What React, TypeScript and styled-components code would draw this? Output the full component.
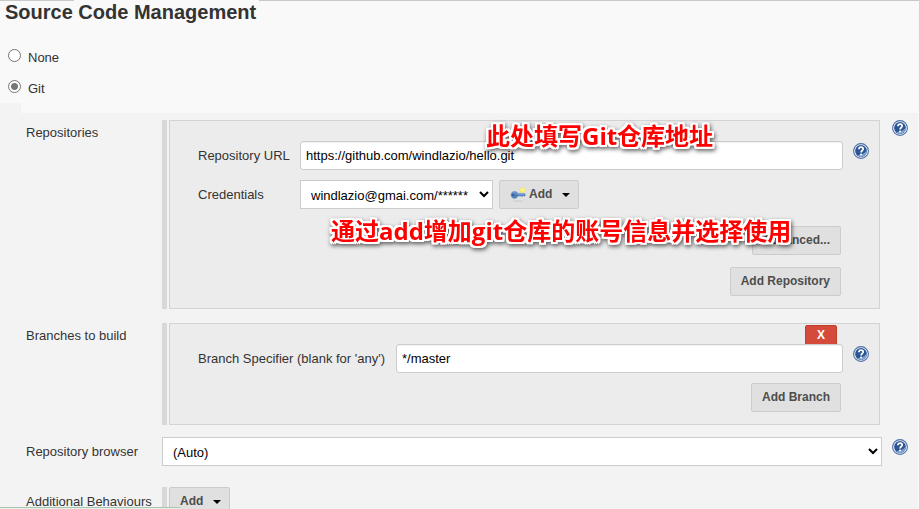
import React, { useState } from "react";
import styled, { createGlobalStyle } from "styled-components";

const GlobalStyle = createGlobalStyle`
  *, *::before, *::after { box-sizing: border-box; }
  body {
    margin: 0;
    overflow: hidden;
    background: #f9f9f9;
    color: #333;
    font: 13px/18px "Liberation Sans", Arial, sans-serif;
  }
  button, input, select { font: inherit; margin: 0; }
`;

const Page = styled.main`
  position: relative;
  min-height: 100vh;
  display: flex;
  flex-direction: column;
`;

const TopEdge = styled.div`
  display: flex;
  justify-content: space-between;
  height: 1px;
`;

const EdgeLine = styled.span<{ $grow?: boolean }>`
  background: #c8c8c8;
  flex: ${(p) => (p.$grow ? "1" : "0 0 74px")};
  margin-left: ${(p) => (p.$grow ? "185px" : "0")};
`;

const Title = styled.h1`
  margin: 0;
  padding-left: 5px;
  font-size: 20px;
  line-height: 22px;
  font-weight: bold;
`;

const Choices = styled.div`
  display: flex;
  flex-direction: column;
  gap: 13px;
  padding: 26px 8px 5px;
`;

const Choice = styled.label`
  display: flex;
  gap: 7px;
  height: 18px;
  line-height: 18px;
`;

const Radio = styled.input.attrs({ type: "radio" })`
  width: 13px;
  height: 13px;
  appearance: none;
  border: 1px solid #767676;
  border-radius: 50%;
  background: #fff;

  &:checked {
    background: radial-gradient(circle, #767676 3px, #fff 4px);
  }
`;

const Indent = styled.div`
  width: 21px;
  height: 10px;
  background: #f3f3f3;
`;

const Settings = styled.section`
  flex: 1;
  display: flex;
  flex-direction: column;
  margin-right: 1px;
  padding: 7px 10px 0 26px;
  background: #f3f3f3;
`;

const Row = styled.div<{ $gap: number }>`
  display: grid;
  grid-template-columns: 136px minmax(0, 1fr) 26px;
  align-items: start;
  margin-bottom: ${(p) => p.$gap}px;
`;

const RowTitle = styled.div<{ $beside?: boolean }>`
  padding-top: ${(p) => (p.$beside ? 6 : 4)}px;
  white-space: nowrap;
`;

const Group = styled.div`
  display: flex;
  gap: 2px;
  margin-right: 2px;

  &::before {
    content: "";
    flex: 0 0 5px;
    background: #d8d8d8;
  }
`;

const Box = styled.div`
  flex: 1;
  min-width: 0;
  padding: 20px 10px 12px 28px;
  border: 1px solid #d3d3d3;
  background: #ececec;
`;

const TightBox = styled(Box)`
  padding-top: 1px;
`;

const Field = styled.div<{ $label: number }>`
  display: grid;
  grid-template-columns: ${(p) => p.$label}px minmax(0, 1fr) 26px;
  align-items: start;

  & + & {
    margin-top: 10px;
  }
`;

const FieldLabel = styled.label`
  padding-top: 6px;
  white-space: nowrap;
`;

const Inline = styled.div`
  display: flex;
  gap: 6px;
`;

const TextBox = styled.input.attrs({ type: "text" })`
  width: 100%;
  height: 29px;
  padding: 0 5px;
  border: 1px solid #ccc;
  border-radius: 3px;
  background: #fff;
  color: #000;
  box-shadow: inset 0 1px 1px rgba(0, 0, 0, 0.06);
`;

const SelectBox = styled.select<{ $width?: number }>`
  width: ${(p) => (p.$width ? `${p.$width}px` : "100%")};
  height: 29px;
  padding: 1px 0 0 6px;
  border: 1px solid #ccc;
  border-radius: 0;
  background: #fff;
  color: #000;
`;

const Button = styled.button`
  display: inline-flex;
  align-items: center;
  height: 29px;
  padding: 0 10px 2px;
  border: 1px solid #ccc;
  border-radius: 2px;
  background: #e0e0e0;
  color: #4d4d4d;
  font-size: 12px;
  font-weight: bold;
  white-space: nowrap;
`;

const CaretButton = styled(Button)`
  padding-right: 8px;
`;

const Caret = styled.span`
  margin: 3px 0 0 10px;
  border: 4px solid transparent;
  border-top-color: #000;
  border-bottom: 0;
`;

const Actions = styled.div<{ $top: number }>`
  display: flex;
  flex-direction: column;
  align-items: flex-end;
  gap: 12px;
  padding: ${(p) => p.$top}px 28px 0 0;
`;

const DeleteBar = styled.div`
  display: flex;
  justify-content: flex-end;
  padding-right: 32px;
`;

const DeleteButton = styled.button`
  width: 32px;
  height: 20px;
  margin-bottom: -1px;
  padding: 0;
  border: 1px solid #c33c2c;
  border-radius: 2px;
  background: #d44b3b;
  color: #fff;
  font-size: 12px;
  font-weight: bold;
  line-height: 18px;
`;

const HelpButton = styled.button<{ $drop?: boolean }>`
  justify-self: end;
  width: 16px;
  height: 16px;
  margin-top: ${(p) => (p.$drop ? 2 : 0)}px;
  padding: 0;
  border: 0;
  background: none;
`;

const Icon = styled.svg`
  display: block;
`;

const KeySlot = styled.span`
  margin-right: 1px;
`;

const Note = styled.p<{ $left: number; $top: number }>`
  position: absolute;
  left: ${(p) => p.$left}px;
  top: ${(p) => p.$top}px;
  margin: 0;
  color: #f00;
  font: bold 24px/32px "Open Sans", "Noto Sans CJK SC", sans-serif;
  white-space: nowrap;
  pointer-events: none;
  text-shadow: 2px 0 #fff, -2px 0 #fff, 0 2px #fff, 0 -2px #fff, 2px 1px #fff,
    2px -1px #fff, -2px 1px #fff, -2px -1px #fff, 2px 2px #fff, -2px 2px #fff,
    2px -2px #fff, -2px -2px #fff;
  filter: drop-shadow(1px 2px 2px rgba(0, 0, 0, 0.6));
`;

const StatusEdge = styled.div`
  position: fixed;
  left: 0;
  bottom: 0;
  width: 181px;
  height: 2px;
  border-top: 1px solid #a9c5b0;
  border-top-right-radius: 2px;
  background: #e9f1eb;
`;

function Help({ topic, drop }: { topic: string; drop?: boolean }) {
  return (
    <HelpButton type="button" aria-label={`Help for ${topic}`} $drop={drop}>
      <Icon width="16" height="16" viewBox="0 0 16 16" aria-hidden="true">
        <circle cx="8" cy="8" r="7.4" fill="#f4f7fb" stroke="#4a70a8" strokeWidth="1.1" />
        <circle cx="8" cy="8" r="5.9" fill="#2c5594" />
        <path d="M13.9 7.5A5.9 5.9 0 0 1 4 12.3C8 12 11.500 10.500 13.900 7.500Z" fill="#7f9fce" />
        <path
          d="M5.900 6.300C5.900 4.900 6.800 4.200 8 4.200C9.300 4.200 10.200 4.900 10.200 6C10.200 7.500 8.100 7.600 8.100 9.400"
          fill="none"
          stroke="#fff"
          strokeWidth="1.700"
        />
        <circle cx="8.100" cy="11.500" r="1.050" fill="#fff" />
      </Icon>
    </HelpButton>
  );
}

function KeyIcon() {
  return (
    <Icon width="18" height="16" viewBox="0 0 18 16" aria-hidden="true">
      <ellipse cx="8" cy="15" rx="5.500" ry="0.700" fill="#cfcfcf" />
      <circle cx="12.500" cy="4.200" r="2.700" fill="#f5ec68" />
      <circle cx="12.500" cy="4.200" r="1.100" fill="#fffbb8" />
      <path
        d="M4.500 5.400C6.200 5.400 7.300 6.200 7.900 7.400H14.300L15.300 8.400V9.500L14.300 10.200L13.400 9.700L12.400 10.500L11.300 9.900L10.200 10.300L9.200 9.900H7.900C7.400 11.500 6.200 12.400 4.500 12.400C2.400 12.400 1 10.900 1 8.900C1 6.900 2.400 5.400 4.500 5.400Z"
        fill="#4f7db8"
        stroke="#6b93c4"
        strokeWidth="0.500"
      />
      <path d="M2.500 7.300C3.500 6.300 5.500 6.300 6.600 7.600L8 8.300H14" fill="none" stroke="#8aaed8" strokeWidth="0.800" />
      <circle cx="2.900" cy="9" r="0.900" fill="#2f5588" />
    </Icon>
  );
}

export default function App() {
  const [scm, setScm] = useState("git");

  return (
    <>
      <GlobalStyle />
      <Page>
        <TopEdge>
          <EdgeLine />
          <EdgeLine $grow />
        </TopEdge>
        <Title>Source Code Management</Title>
        <Choices>
          <Choice>
            <Radio name="scm" checked={scm === "none"} onChange={() => setScm("none")} />
            None
          </Choice>
          <Choice>
            <Radio name="scm" checked={scm === "git"} onChange={() => setScm("git")} />
            Git
          </Choice>
        </Choices>
        <Indent />

        <Settings>
          <Row $gap={14}>
            <RowTitle>Repositories</RowTitle>
            <Group>
              <Box>
                <Field $label={102}>
                  <FieldLabel htmlFor="url">Repository URL</FieldLabel>
                  <TextBox id="url" defaultValue="https://github.com/windlazio/hello.git" />
                  <Help topic="Repository URL" drop />
                </Field>
                <Field $label={102}>
                  <FieldLabel htmlFor="credentials">Credentials</FieldLabel>
                  <Inline>
                    <SelectBox id="credentials" $width={193}>
                      <option>windlazio@gmai.com/******</option>
                    </SelectBox>
                    <CaretButton type="button">
                      <KeySlot>
                        <KeyIcon />
                      </KeySlot>
                      Add
                      <Caret />
                    </CaretButton>
                  </Inline>
                </Field>
                <Actions $top={17}>
                  <Button type="button">Advanced...</Button>
                  <Button type="button">Add Repository</Button>
                </Actions>
              </Box>
            </Group>
            <Help topic="Repositories" />
          </Row>

          <Row $gap={12}>
            <RowTitle>Branches to build</RowTitle>
            <Group>
              <TightBox>
                <DeleteBar>
                  <DeleteButton type="button">X</DeleteButton>
                </DeleteBar>
                <Field $label={198}>
                  <FieldLabel htmlFor="branch">Branch Specifier (blank for 'any')</FieldLabel>
                  <TextBox id="branch" defaultValue="*/master" />
                  <Help topic="Branch Specifier" drop />
                </Field>
                <Actions $top={10}>
                  <Button type="button">Add Branch</Button>
                </Actions>
              </TightBox>
            </Group>
          </Row>

          <Row $gap={21}>
            <FieldLabel htmlFor="browser">Repository browser</FieldLabel>
            <SelectBox id="browser">
              <option>(Auto)</option>
            </SelectBox>
            <Help topic="Repository browser" drop />
          </Row>

          <Row $gap={0}>
            <RowTitle $beside>Additional Behaviours</RowTitle>
            <Group>
              <CaretButton type="button">
                Add
                <Caret />
              </CaretButton>
            </Group>
          </Row>
        </Settings>

        <Note $left={486} $top={120}>此处填写Git仓库地址</Note>
        <Note $left={331} $top={215}>通过add增加git仓库的账号信息并选择使用</Note>
        <StatusEdge />
      </Page>
    </>
  );
}
